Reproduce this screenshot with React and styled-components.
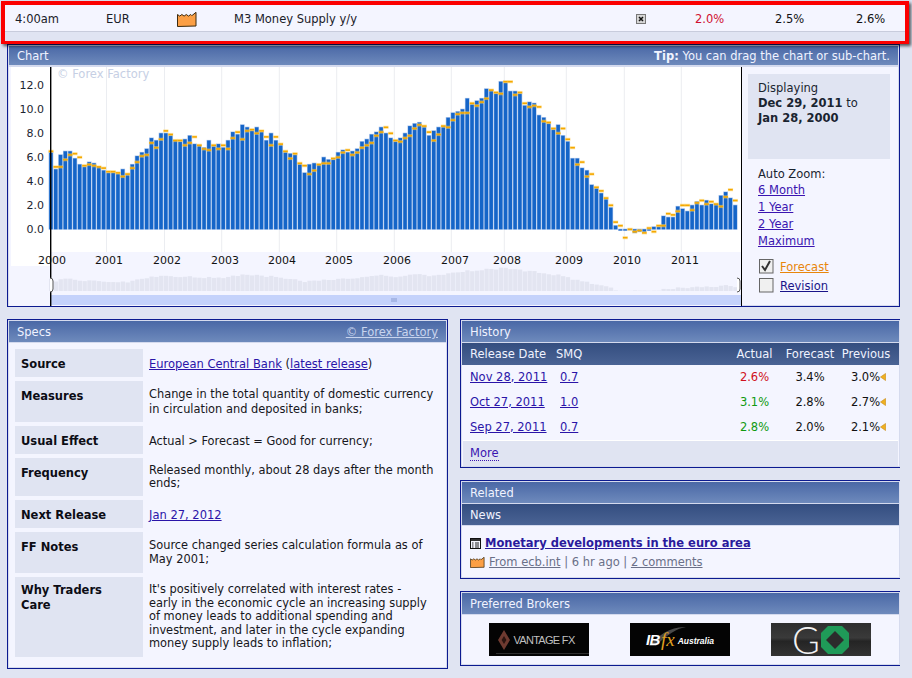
import React from "react";
import styled, { createGlobalStyle } from "styled-components";

const Global = createGlobalStyle`
  html, body { margin: 0; padding: 0; background: #e0e4f2; }
  body { font-family: "DejaVu Sans", Verdana, sans-serif; font-size: 11.5px; color: #111; width: 912px; height: 678px; overflow: hidden; }
  a { color: #2a14a8; text-decoration: underline; }
`;

const data = [[6.4,6.5],[5,5.2],[6.2,5.2],[6.5,5.8],[6.5,6.2],[5.9,6.3],[5.4,6],[5.2,5.3],[5.6,5.4],[5.5,5.3],[5.2,5.2],[4.9,5.1],[4.7,4.8],[4.7,4.8],[4.6,4.7],[5,4.4],[4.5,4.6],[5.4,5.1],[6.1,5.6],[6.4,6.1],[6.7,6.2],[7.6,7.2],[7.4,6.8],[8,7.5],[8,8.2],[7.8,7.9],[7.4,7.4],[7.3,7.4],[7.5,7],[7.8,7.2],[7.1,7.7],[7,7],[6.8,6.7],[7.4,6.6],[6.9,7],[7.1,6.7],[6.8,7],[7.4,6.7],[8.1,7.6],[7.9,8.1],[8.7,7.5],[8.5,8.2],[8.2,8.3],[8.5,8],[8.1,8.2],[7.4,7.7],[8,7],[7.4,7.7],[7,7.1],[6.4,6.5],[6.3,5.9],[6.2,6.3],[5.4,5.5],[4.7,5.3],[5.4,4.6],[5.5,4.9],[5.4,5.4],[6,5.5],[5.8,5.5],[5.8,5.9],[6.4,6],
[6.6,6.4],[6.4,6.6],[6.5,6.2],[6.7,6.4],[7.3,6.8],[7.5,7],[7.9,7.2],[8.1,7.8],[8.5,8.1],[8,8.5],[7.6,8],[7.3,7.4],[7.6,7.3],[8,7.6],[8.6,7.8],[8.8,8.4],[8.9,8.7],[8.5,8.6],[7.8,8.1],[8.2,7.4],[8.5,7.9],[8.5,8.6],[9.3,8.5],[9.7,9.1],[9.8,9.6],[10,9.7],[10.9,9.7],[10.4,10.5],[10.7,10.3],[10.9,10.6],[11.7,10.9],[11.6,11.6],[11.3,11.4],[12.3,11.3],[12.2,12.3],[11.5,12.3],[11.5,11.2],[11.3,11.4],[10.3,10.5],[10.6,10.2],[10.5,10.3],[9.5,10.2],[9.3,9],[8.8,8.9],[8.3,8.4],[8.7,8],[7.8,8.4],[7.3,7.5],[5.9,6.8],[5.9,5.4],[5.1,5.6],[4.9,4.4],[3.7,4.6],[3.4,3.5],[3,3.2],[2.5,2.6],[1.8,2],[0.3,0.6],[-0.1,0.3],[-0.1,-0.7],[0,0],[-0.3,-0.2],[-0.2,-0.1],[-0.2,-0.3],[-0.1,0.1],[0.2,-0.2],[0.2,0.3],[1.1,0.3],[1,1.3],[1,1.2],[1.9,1.5],[1.7,2],[1.5,2],[2,1.6],[2.3,2.2],[2,2.4],[2.4,2.1],[2.1,2.3],[2.1,2.1],[2.8,1.9],[3.1,2.7],[2.6,3.3],[2,2.4]];

const gridX = [106.5,164.5,221.7,279.3,336.7,394.3,451.3,504.3,566.3,624.3,681.3];
const years = [[2000,52],[2001,109],[2002,167],[2003,225],[2004,282],[2005,339],[2006,397],[2007,455],[2008,507],[2009,569],[2010,627],[2011,685]];
const yTicks = [12,10,8,6,4,2,0];
const BASE = 229.3, UNIT = 12, STEP = 4.785;

const ChartSvg = styled.svg`
  display: block;
  flex: none;
  font-family: "DejaVu Sans", sans-serif;
  font-size: 11px;
`;

function Handle({ x }) {
  return <path d={`M${x-1} 278 q3 0 3 3 v8 q0 3 -3 3`} fill="#fff" stroke="#555" strokeWidth="1" />;
}

function Chart() {
  return (
    <ChartSvg width="733" height="239" viewBox="9 67 733 239">
      <rect x="9" y="67" width="733" height="239" fill="#f4f5ff" />
      <rect x="11" y="67" width="40" height="199" fill="#fff" />
      <rect x="51" y="67" width="690" height="185" fill="#fff" />
      {gridX.map(x => <rect key={x} x={x - 0.5} y="67" width="1" height="185" fill="#ebedf1" />)}
      <text x="57" y="78" fill="#c6cfe4" fontSize="11.5">© Forex Factory</text>
      {yTicks.map(v => (
        <text key={v} x="44" y={BASE - v * UNIT + 4} textAnchor="end" fill="#1c2430">{v.toFixed(1)}</text>
      ))}
      {data.map(([a], i) => {
        const x = 51 + STEP * i - 2.4;
        const y = a >= 0 ? BASE - a * UNIT : BASE;
        const h = Math.max(Math.abs(a) * UNIT, 0.6);
        return (
          <g key={i}>
            <rect x={x} y={y - 0.6} width={4.7} height={h + 1} fill="#a9c4ec" />
            <rect x={x + 0.6} y={y} width={3.5} height={h} fill="#1565c8" />
          </g>
        );
      })}
      {data.map(([, f], i) => {
        const x = 51 + STEP * i - 2.6;
        const y = BASE - f * UNIT;
        return (
          <g key={i}>
            <rect x={x} y={y - 1.6} width={5.2} height={3.2} fill="#fbd36a" opacity="0.55" />
            <rect x={x + 0.3} y={y - 0.8} width={4.6} height={1.6} fill="#f5a800" />
          </g>
        );
      })}
      {data.map(([a], i) => {
        const h = Math.max(Math.abs(a), 0.1) * 1.9;
        return <rect key={i} x={51 + STEP * i - 2} y={291 - h} width={4.3} height={h} fill="#e3e5f1" />;
      })}
      {years.map(([y, x]) => <text key={y} x={x} y="264" textAnchor="middle" fill="#111">{y}</text>)}
      <rect x="51" y="295" width="690" height="10" fill="#c4d2fb" />
      <path d="M392 298v4M394 298v4M396 298v4" stroke="#8a9cd0" strokeWidth="1" />
      <rect x="50" y="67" width="1.4" height="239" fill="#000" />
      <Handle x={51} />
      <Handle x={738} />
      <rect x="741" y="67" width="1.2" height="239" fill="#000" />
    </ChartSvg>
  );
}

const Page = styled.div`
  display: flex;
  flex-direction: column;
  width: 912px;
`;

const Highlight = styled.div`
  position: relative;
  z-index: 2;
  box-sizing: border-box;
  width: 908px;
  height: 43px;
  margin: 1px 0 0 1px;
  border: 4px solid #fb0000;
  border-bottom-width: 3px;
  box-shadow: 2px 2px 3px rgba(0, 0, 0, 0.65);
  background: #e0e4f2;
`;

const EventRow = styled.div`
  display: grid;
  grid-template-columns: 91px 71px 57px 402px 59px 80px 81px 40px;
  align-items: center;
  box-sizing: border-box;
  height: 27px;
  padding: 2px 0 0 10px;
  background: #f4f5ff;
  border-bottom: 1px solid #c8ccdc;
  color: #1a2028;
`;

const Actual = styled.span`
  color: ${p => p.$c || "#111"};
`;

const Panel = styled.section`
  box-sizing: border-box;
  width: ${p => p.$w}px;
  height: ${p => p.$h}px;
  padding: 1px;
  background: #f4f5ff;
  border: 1px solid #0c1a90;
  border-right: ${p => (p.$open ? "0" : "1px solid #0c1a90")};
  box-shadow: inset 0 0 0 1px #d6dbee;
  display: flex;
  flex-direction: column;
`;

const ChartPanel = styled(Panel)`
  margin-left: 7px;
`;

const PanelHead = styled.header`
  display: flex;
  justify-content: space-between;
  align-items: center;
  flex: none;
  box-sizing: border-box;
  height: ${p => p.$h || 22}px;
  padding: ${p => (p.$h ? 0 : 1)}px 8px 0 8px;
  color: #f0f3ff;
  background: linear-gradient(#4a68a6, #6e8abc);
  border-bottom: ${p => p.$b || 1}px solid #d4daee;
  a { color: #c8d4ee; }
  b { font-weight: bold; }
`;

const SubHead = styled.div`
  flex: none;
  box-sizing: border-box;
  height: 22px;
  padding: 1px 8px 0;
  line-height: 21px;
  color: #f0f3ff;
  background: linear-gradient(#344e80, #4a6394);
  border-bottom: 1px solid #d4daee;
`;

const ChartBody = styled.div`
  display: flex;
  flex: 1;
  min-height: 0;
`;

const Side = styled.aside`
  flex: 1;
  display: flex;
  flex-direction: column;
  padding: 7px 8px 0 6px;
  color: #1a2430;
`;

const RangeBox = styled.div`
  box-sizing: border-box;
  height: 85px;
  padding: 7px 10px;
  line-height: 15px;
  background: #e0e4f2;
  b { font-weight: bold; }
`;

const Zoom = styled.div`
  display: flex;
  flex-direction: column;
  margin: 7px 0 0 10px;
  line-height: 17px;
  a { color: #3a14b0; }
`;

const ZoomLabel = styled.span`
  margin-bottom: -1px;
`;

const Check = styled.label`
  display: flex;
  align-items: center;
  gap: 6px;
  margin: ${p => p.$mt}px 0 0 11px;
  height: 15px;
  a { color: ${p => p.$c}; }
`;

const Columns = styled.div`
  display: flex;
  align-items: flex-start;
  gap: 12px;
  margin: 12px 0 0 7px;
`;

const RightCol = styled.div`
  display: flex;
  flex-direction: column;
  gap: 12px;
`;

const SpecList = styled.div`
  display: flex;
  flex-direction: column;
  gap: 4px;
  padding: 6px 6px 0 6px;
`;

const SpecRow = styled.div`
  display: grid;
  grid-template-columns: 128px 1fr;
  column-gap: 6px;
  height: ${p => p.$h}px;
`;

const SpecLabel = styled.div`
  padding: ${p => p.$pt || 9}px 0 0 6px;
  line-height: ${p => p.$lh || 13.5}px;
  font-weight: bold;
  background: #e0e4f2;
  color: #0c0c14;
`;

const SpecValue = styled.div`
  align-self: center;
  padding-top: ${p => p.$pt || 0}px;
  line-height: ${p => p.$lh || 13.5}px;
  font-size: 11.4px;
  color: #161620;
  a { font-size: 11.5px; }
`;

const Table = styled.div`
  flex: none;
`;

const Cols = styled.div`
  display: grid;
  grid-template-columns: 86px 1fr 55px 56px 56px;
  align-items: center;
  padding: 0 5px 0 8px;
`;

const HeadRow = styled(Cols)`
  height: 22px;
  color: #f0f3ff;
  background: linear-gradient(#344e80, #4a6394);
  box-sizing: border-box;
`;

const BodyRow = styled(Cols)`
  box-sizing: border-box;
  height: 25px;
  padding-bottom: 2px;
  color: #111;
`;

const Center = styled.span`
  text-align: center;
  color: ${p => p.$c || "inherit"};
`;

const Smq = styled.span`
  padding-left: 4px;
`;

const Prev = styled.span`
  display: inline-flex;
  align-items: center;
  justify-content: center;
  padding-left: 5px;
`;

const More = styled.div`
  box-sizing: border-box;
  height: 26px;
  margin: 0 1px;
  padding: 5px 7px;
  background: #e0e4f2;
  border-top: 1px solid #fff;
  a { text-decoration: none; border-bottom: 1px dotted #3a14b0; color: #3a14b0; }
`;

const NewsBody = styled.div`
  padding: 9px 8px 0;
`;

const NewsTitle = styled.div`
  display: flex;
  align-items: center;
  gap: 4px;
  height: 16px;
  a { font-weight: bold; color: #2a1a9c; }
`;

const NewsMeta = styled.div`
  display: flex;
  align-items: center;
  gap: 4px;
  height: 18px;
  margin-top: 2px;
  color: #6a7088;
  a { color: #6a7088; }
`;

const Brokers = styled.div`
  display: flex;
  gap: 41px;
  padding: 8px 0 0 27px;
`;

const Logo = styled.div`
  position: relative;
  display: flex;
  align-items: center;
  justify-content: center;
  box-sizing: border-box;
  width: 100px;
  height: 33px;
  padding-right: ${p => p.$pr || 0}px;
  background: ${p => p.$bg || "#040404"};
  font-family: "Liberation Sans", Arial, sans-serif;
`;

const VantageText = styled.span`
  margin-left: 3px;
  font-size: 11px;
  letter-spacing: -0.7px;
  color: #c0c0c0;
`;

const VantageRule = styled.i`
  position: absolute;
  left: 7px;
  right: 0;
  bottom: 2px;
  height: 1px;
  background: #2e2e2e;
`;

const IbText = styled.span`
  position: relative;
  font-size: 15px;
  font-weight: bold;
  font-style: italic;
  letter-spacing: -0.5px;
  color: #fff;
`;

const FxText = styled.span`
  position: relative;
  font-family: "Liberation Serif", serif;
  font-size: 19px;
  font-style: italic;
  color: #e0a020;
  margin: 0 3px 0 1px;
`;

const AusText = styled.span`
  position: relative;
  font-size: 8.5px;
  font-weight: bold;
  font-style: italic;
  color: #fff;
  margin-top: 3px;
`;

const Swoosh = styled.svg`
  position: absolute;
  left: 18px;
  top: 2px;
`;

const GoText = styled.span`
  font-family: "Lato", sans-serif;
  font-weight: 300;
  font-size: 38px;
  line-height: 33px;
  color: #f2f2f2;
`;

function Factory({ w = 20, h = 15 }) {
  return (
    <svg width={w} height={h} viewBox="0 0 20 15" style={{ flex: "none" }}>
      <path d="M.5 14.5V2.5l2.2 1.6 2.2-1.6 2.2 1.6 2.2-1.6 2.2 1.6 2.2-1.6 1 1 1-.5 3.3-2.7v13.7z" fill="#fb9f45" stroke="#3a2a10" strokeWidth="1" />
    </svg>
  );
}

function Xbox() {
  return (
    <svg width="10" height="10" viewBox="0 0 10 10">
      <rect x=".5" y=".5" width="9" height="9" fill="#d6d6d6" stroke="#777" />
      <path d="M3 3l4 4M7 3l-4 4" stroke="#111" strokeWidth="1.5" />
    </svg>
  );
}

function Tri() {
  return (
    <svg width="6" height="8" viewBox="0 0 6 8">
      <path d="M5.5 .5v7L.5 4z" fill="#f0b020" stroke="#c88a10" strokeWidth=".6" />
    </svg>
  );
}

function Box({ checked }) {
  return (
    <svg width="15" height="15" viewBox="0 0 15 15" style={{ flex: "none" }}>
      <rect x=".5" y=".5" width="13.5" height="13.5" fill="#f0f0f0" stroke="#666" />
      {checked && <path d="M3 7l3 4 5-9" fill="none" stroke="#333" strokeWidth="2" />}
    </svg>
  );
}

function NewsIcon() {
  return (
    <svg width="11" height="11" viewBox="0 0 11 11" style={{ flex: "none" }}>
      <rect x=".5" y=".5" width="10" height="10" fill="#f4f5ff" stroke="#111" />
      <rect x="1" y="1" width="9" height="2" fill="#333" />
      <path d="M2 5h1.5M5 5h4M2 7h1.5M5 7h4M2 9h1.5M5 9h4" stroke="#222" />
    </svg>
  );
}

const specs = [
  { label: "Source", h: 28, pt: 4, v: <><a href="#a">European Central Bank</a> (<a href="#b">latest release</a>)</> },
  { label: "Measures", h: 41, lh: 15, v: <>Change in the total quantity of domestic currency<br />in circulation and deposited in banks;</> },
  { label: "Usual Effect", h: 28, pt: 4, v: "Actual > Forecast = Good for currency;" },
  { label: "Frequency", h: 38, v: <>Released monthly, about 28 days after the month<br />ends;</> },
  { label: "Next Release", h: 28, pt: 4, v: <a href="#c">Jan 27, 2012</a> },
  { label: "FF Notes", h: 41, v: <>Source changed series calculation formula as of<br />May 2001;</> },
  { label: <>Why Traders<br />Care</>, h: 80, lpt: 6, llh: 15, v: <>It's positively correlated with interest rates -<br />early in the economic cycle an increasing supply<br />of money leads to additional spending and<br />investment, and later in the cycle expanding<br />money supply leads to inflation;</> },
];

const history = [
  ["Nov 28, 2011", "0.7", "2.6%", "#d01020", "3.4%", "3.0%"],
  ["Oct 27, 2011", "1.0", "3.1%", "#109a10", "2.8%", "2.7%"],
  ["Sep 27, 2011", "0.7", "2.8%", "#109a10", "2.0%", "2.1%"],
];

export default function App() {
  return (
    <Page>
      <Global />
      <Highlight>
        <EventRow>
          <span>4:00am</span>
          <span>EUR</span>
          <Factory />
          <span>M3 Money Supply y/y</span>
          <Xbox />
          <Actual $c="#d01030">2.0%</Actual>
          <Actual>2.5%</Actual>
          <Actual>2.6%</Actual>
        </EventRow>
      </Highlight>

      <ChartPanel $w={893} $h={263}>
        <PanelHead $h={21} $b={2}>
          <span>Chart</span>
          <span><b>Tip:</b> You can drag the chart or sub-chart.</span>
        </PanelHead>
        <ChartBody>
          <Chart />
          <Side>
            <RangeBox>
              Displaying<br />
              <b>Dec 29, 2011</b> to<br />
              <b>Jan 28, 2000</b>
            </RangeBox>
            <Zoom>
              <ZoomLabel>Auto Zoom:</ZoomLabel>
              <a href="#6">6 Month</a>
              <a href="#1">1 Year</a>
              <a href="#2">2 Year</a>
              <a href="#m">Maximum</a>
            </Zoom>
            <Check $mt={9} $c="#e8860c"><Box checked /><a href="#f">Forecast</a></Check>
            <Check $mt={4} $c="#1a1488"><Box /><a href="#r">Revision</a></Check>
          </Side>
        </ChartBody>
      </ChartPanel>

      <Columns>
        <Panel $w={441} $h={350}>
          <PanelHead>
            <span>Specs</span>
            <a href="#ff">© Forex Factory</a>
          </PanelHead>
          <SpecList>
            {specs.map((s, i) => (
              <SpecRow key={i} $h={s.h}>
                <SpecLabel $pt={s.lpt} $lh={s.llh}>{s.label}</SpecLabel>
                <SpecValue $lh={s.lh} $pt={s.pt}>{s.v}</SpecValue>
              </SpecRow>
            ))}
          </SpecList>
        </Panel>

        <RightCol>
          <Panel $w={440} $h={149} $open>
            <PanelHead><span>History</span></PanelHead>
            <Table>
              <HeadRow>
                <span>Release Date</span>
                <span>SMQ</span>
                <Center>Actual</Center>
                <Center>Forecast</Center>
                <Center>Previous</Center>
              </HeadRow>
              {history.map(r => (
                <BodyRow key={r[0]}>
                  <a href="#d">{r[0]}</a>
                  <Smq><a href="#s">{r[1]}</a></Smq>
                  <Center $c={r[3]}>{r[2]}</Center>
                  <Center>{r[4]}</Center>
                  <Prev>{r[5]}<Tri /></Prev>
                </BodyRow>
              ))}
            </Table>
            <More><a href="#more">More</a></More>
          </Panel>

          <Panel $w={440} $h={99} $open>
            <PanelHead><span>Related</span></PanelHead>
            <SubHead>News</SubHead>
            <NewsBody>
              <NewsTitle>
                <NewsIcon />
                <a href="#n">Monetary developments in the euro area</a>
              </NewsTitle>
              <NewsMeta>
                <Factory w={15} h={11} />
                <span><a href="#e">From ecb.int</a> | 6 hr ago | <a href="#k">2 comments</a></span>
              </NewsMeta>
            </NewsBody>
          </Panel>

          <Panel $w={440} $h={75} $open>
            <PanelHead><span>Preferred Brokers</span></PanelHead>
            <Brokers>
              <Logo $pr={5}>
                <svg width="12" height="20" viewBox="0 0 12 20">
                  <path d="M6 0L12 10 6 20 0 10z" fill="#6e3a30" />
                  <path d="M6 6L8.4 10 6 14 3.6 10z" fill="#2a1410" />
                </svg>
                <VantageText>VANTAGE FX</VantageText>
                <VantageRule />
              </Logo>
              <Logo>
                <Swoosh width="40" height="24" viewBox="0 0 40 24">
                  <path d="M1 21C10 10 24 1 38 2 30 3 18 10 8 21z" fill="#4a4a4a" />
                </Swoosh>
                <IbText>IB</IbText>
                <FxText>fx</FxText>
                <AusText>Australia</AusText>
              </Logo>
              <Logo $bg="linear-gradient(#2e2e2e, #3a3a3a 45%, #242424 55%, #333)">
                <GoText>G</GoText>
                <svg width="30" height="30" viewBox="0 0 30 30">
                  <path d="M8 1h14l7 7v14l-7 7H8l-7-7V8z" fill="#1f9a58" />
                  <path d="M15 6l9 9-9 9-9-9z" fill="#2c2c2c" />
                </svg>
              </Logo>
            </Brokers>
          </Panel>
        </RightCol>
      </Columns>
    </Page>
  );
}
